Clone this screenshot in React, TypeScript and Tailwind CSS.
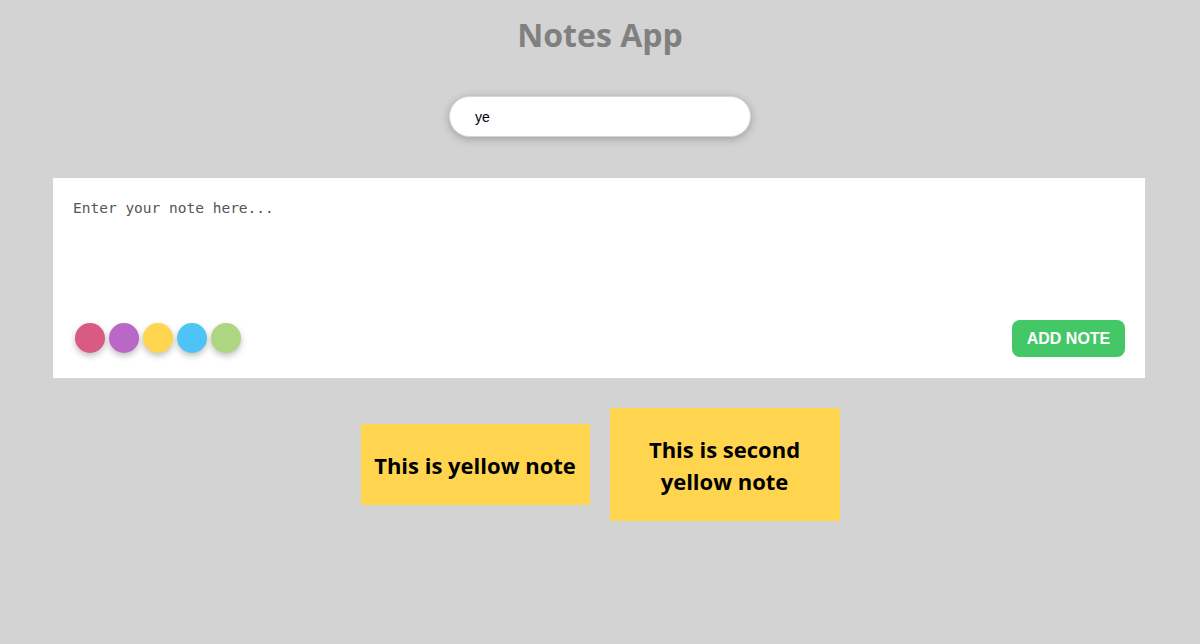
import React from "react";

const colors = ["#d95a82", "#ba68c8", "#ffd54f", "#4fc3f7", "#aed581"];

export default function App() {
  return (
    <div className="min-h-screen w-full bg-[#d3d3d3] pt-[13px]" style={{ minHeight: 644 }}>
      <h1 className="text-center text-[32px] font-bold leading-[44px] text-[#808080] [font-family:'Open_Sans',sans-serif]">
        Notes App
      </h1>
      <div className="mt-[39px] flex justify-center">
        <input
          autoFocus
          defaultValue="ye"
          className="h-[41px] w-[302px] rounded-full border border-[#d6d6d6] bg-white pl-[25px] text-[14px] text-black shadow-[0_2px_8px_rgba(0,0,0,0.25)] outline-none [font-family:'Liberation_Sans',Arial,sans-serif]"
        />
      </div>
      <div className="ml-[53px] mt-[41px] flex h-[200px] w-[1092px] flex-col bg-white px-5 pb-[21px] pt-[22px]">
        <textarea
          placeholder="Enter your note here..."
          className="flex-1 resize-none border-none bg-transparent p-0 text-[14.5px] leading-[17px] text-[#333] outline-none placeholder:text-[#555] [font-family:'DejaVu_Sans_Mono',monospace]"
        />
        <div className="flex h-[37px] items-center justify-between">
          <div className="ml-[2px] -mt-[2px] flex gap-[4px]">
            {colors.map((c) => (
              <span
                key={c}
                className="block h-[30px] w-[30px] rounded-full shadow-[0_3px_6px_rgba(0,0,0,0.25)]"
                style={{ backgroundColor: c }}
              />
            ))}
          </div>
          <button className="h-[37px] w-[113px] rounded-[8px] bg-[#44c767] text-[16px] font-bold text-white [font-family:'Liberation_Sans',Arial,sans-serif]">
            ADD NOTE
          </button>
        </div>
      </div>
      <div className="mt-[30px] flex items-center justify-center gap-5">
        <div className="w-[229px] bg-[#ffd54f] px-2 pb-[24px] pt-[25px] text-center text-[22px] font-bold leading-[32px] text-black [font-family:'Open_Sans',sans-serif]">
          This is yellow note
        </div>
        <div className="w-[230px] bg-[#ffd54f] px-2 pb-[24px] pt-[25px] text-center text-[22px] font-bold leading-[32px] text-black [font-family:'Open_Sans',sans-serif]">
          This is second yellow note
        </div>
      </div>
    </div>
  );
}
